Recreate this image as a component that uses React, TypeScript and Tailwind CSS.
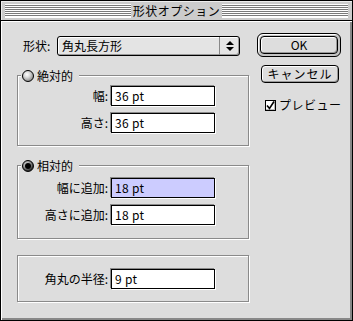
import React from "react";

const font = { fontFamily: '"Noto Sans CJK JP", "Noto Sans", sans-serif' };

const Radio: React.FC<{ checked?: boolean }> = ({ checked }) => (
    <span
        className={
            checked
                ? "w-[12px] h-[12px] rounded-full border border-black bg-[radial-gradient(circle_at_40%_35%,#eee_0px,#888_4px,#333_6px)] flex items-center justify-center"
                : "w-[12px] h-[12px] rounded-full border border-black bg-[radial-gradient(circle_at_40%_35%,#ffffff_0px,#d8d8d8_3px,#8a8a8a_7px)]"
        }
    >
        {checked && <span className="w-[6px] h-[6px] rounded-full bg-black" />}
    </span>
);

const Field: React.FC<{ value: string; selected?: boolean }> = ({
    value,
    selected,
}) => (
    <div
        className={
            "w-[104px] h-[20px] border border-black shadow-[-1px_-1px_0_#8a8a8a,1px_1px_0_#ffffff] flex items-center pl-[3px] text-[12px] leading-none tracking-[0.3px] " +
            (selected ? "bg-[#ccccff]" : "bg-white")
        }
    >
        {value}
    </div>
);

const Row: React.FC<{ label: string; value: string; selected?: boolean }> = ({
    label,
    value,
    selected,
}) => (
    <div className="flex items-center">
        <div className="w-[93px] text-right text-[12px] leading-none pr-[3px]">
            {label}
        </div>
        <Field value={value} selected={selected} />
    </div>
);

const GroupBox: React.FC<{
    title?: string;
    checked?: boolean;
    className: string;
    children: React.ReactNode;
}> = ({ title, checked, className, children }) => (
    <div
        className={
            "relative w-[232px] border border-[#8a8a8a] shadow-[1px_1px_0_#ffffff,inset_1px_1px_0_#ffffff] " +
            className
        }
    >
        {title && (
            <div className="absolute left-[3px] -top-[8px] h-[15px] pl-[1px] pr-[6px] bg-[#dddddd] flex items-center gap-[3px] text-[12px] leading-none">
                <Radio checked={checked} />
                <span>{title}</span>
            </div>
        )}
        {children}
    </div>
);

const Stripes: React.FC<{ className: string }> = ({ className }) => (
    <div
        className={
            "h-[14px] bg-[repeating-linear-gradient(to_bottom,#ffffff_0px,#ffffff_1px,#7a7a7a_1px,#7a7a7a_2px)] border-b border-white " +
            className
        }
    />
);

export default function App() {
    return (
        <div
            style={font}
            className="w-[353px] h-[321px] bg-black p-[1px] text-black select-none"
        >
            <div className="w-full h-full flex flex-col bg-[#dddddd]">
                {/* title bar */}
                <div className="h-[20px] bg-[#cccccc] flex items-center px-[4px] shadow-[inset_1px_1px_0_#eeeeee] border-b border-black">
                    <Stripes className="w-[126px]" />
                    <div className="flex-1 text-center text-[12px] leading-none tracking-[0.5px]">
                        形状オプション
                    </div>
                    <Stripes className="w-[126px]" />
                </div>

                {/* content */}
                <div className="flex-1 flex shadow-[inset_1px_1px_0_#ffffff,inset_-2px_-2px_0_#888888] pl-[16px]">
                    <div className="flex flex-col pt-[15px]">
                        {/* popup */}
                        <div className="flex items-center">
                            <span className="text-[12px] leading-none w-[40px] pl-[6px]">
                                形状:
                            </span>
                            <div className="w-[183px] h-[20px] border border-black rounded-[3px] bg-[#e4e4e4] shadow-[inset_1px_1px_0_#ffffff,inset_-1px_-1px_0_#999999] flex items-center">
                                <span className="flex-1 pl-[4px] text-[12px] leading-none">
                                    角丸長方形
                                </span>
                                <div className="w-[20px] h-full border-l border-[#888888] flex flex-col items-center justify-center gap-[2px]">
                                    <span className="w-0 h-0 border-l-[4px] border-r-[4px] border-b-[4px] border-l-transparent border-r-transparent border-b-black" />
                                    <span className="w-0 h-0 border-l-[4px] border-r-[4px] border-t-[4px] border-l-transparent border-r-transparent border-t-black" />
                                </div>
                            </div>
                        </div>

                        <GroupBox
                            title="絶対的"
                            className="mt-[19px] pt-[10px] pb-[12px] flex flex-col gap-[7px]"
                        >
                            <Row label="幅:" value="36 pt" />
                            <Row label="高さ:" value="36 pt" />
                        </GroupBox>

                        <GroupBox
                            title="相対的"
                            checked
                            className="mt-[19px] pt-[12px] pb-[13px] flex flex-col gap-[7px]"
                        >
                            <Row label="幅に追加:" value="18 pt" selected />
                            <Row label="高さに追加:" value="18 pt" />
                        </GroupBox>

                        <GroupBox className="mt-[16px] pt-[13px] pb-[12px]">
                            <Row label="角丸の半径:" value="9 pt" />
                        </GroupBox>
                    </div>

                    {/* buttons */}
                    <div className="flex flex-col items-start pl-[8px] pt-[12px]">
                        <div className="w-[84px] h-[24px] border border-black rounded-[6px] p-[2px] bg-[#c4c4c4] shadow-[inset_1px_1px_0_#ffffff]">
                            <div className="w-full h-full border border-black rounded-[4px] bg-[#dddddd] shadow-[inset_1px_1px_0_#ffffff,inset_-1px_-1px_0_#999999] flex items-center justify-center text-[12px] leading-none">
                                OK
                            </div>
                        </div>
                        <div className="mt-[8px] ml-[4px] w-[78px] h-[18px] border border-black rounded-[4px] bg-[#dddddd] shadow-[inset_1px_1px_0_#ffffff,inset_-1px_-1px_0_#999999] flex items-center justify-center text-[12px] leading-none tracking-[1px]">
                            キャンセル
                        </div>
                        <div className="mt-[16px] ml-[8px] flex items-center gap-[3px] text-[12px] leading-none">
                            <span className="w-[11px] h-[11px] border border-black bg-white shadow-[inset_-1px_-1px_0_#bbbbbb] flex items-center justify-center">
                                <svg width="9" height="9" viewBox="0 0 9 9">
                                    <path
                                        d="M1 4.5 L3.5 7.5 L8 0.5"
                                        fill="none"
                                        stroke="black"
                                        strokeWidth="1.6"
                                    />
                                </svg>
                            </span>
                            <span className="tracking-[0.5px]">プレビュー</span>
                        </div>
                    </div>
                </div>
            </div>
        </div>
    );
}
